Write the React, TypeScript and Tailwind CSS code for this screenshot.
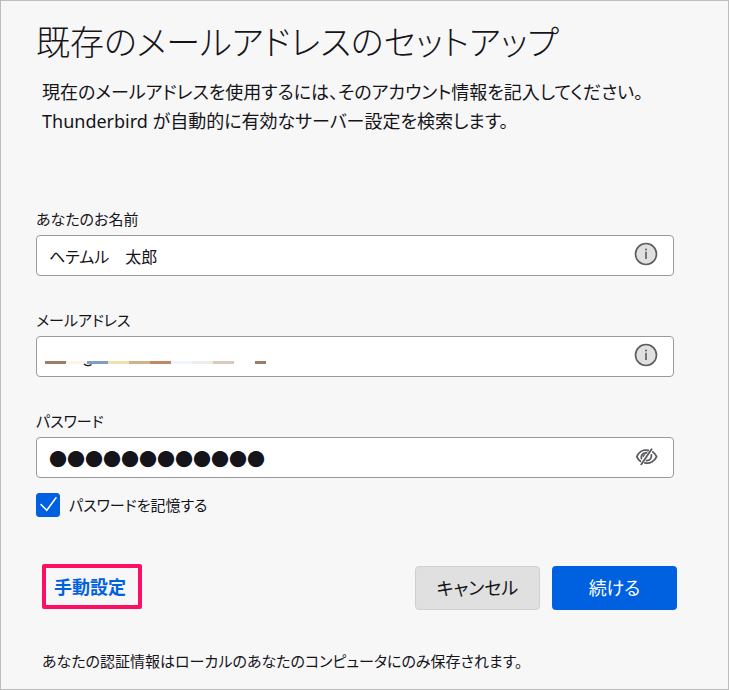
import React, { useState } from 'react';

const inputClass =
  'block h-[41px] w-full rounded border border-[#9a9a9d] bg-white pl-3 pr-14 text-[#15141a] outline-none';

const redactedColors = [
  'bg-[#9a7f68]',
  'bg-[#faf4ec]',
  'bg-[#829dbe]',
  'bg-[#ebe2b0]',
  'bg-[#cdb489]',
  'bg-[#be8a62]',
  'bg-[#f1f5fd]',
  'bg-[#ededea]',
  'bg-[#d8cabe]',
  'bg-white',
];

const InfoIcon: React.FC = () => (
  <svg width="24" height="24" viewBox="0 0 24 24" fill="none">
    <circle cx="12" cy="12" r="10.5" fill="#e0e0e1" stroke="#5b5b60" strokeWidth="1.6" />
    <path d="M12 9.800v7.200" stroke="#5b5b60" strokeWidth="1.6" />
    <circle cx="12" cy="7.4" r="1" fill="#5b5b60" />
  </svg>
);

const EyeSlashIcon: React.FC = () => (
  <svg width="24" height="24" viewBox="0 0 24 24" fill="none" stroke="#5b5b60" strokeWidth="1.8" strokeLinecap="round">
    <path d="M17.600 4.200 7.200 19.400" />
    <path d="M14.200 5.500C9.200 4.400 4.800 6.900 2.800 11.700c.8 2 2 3.500 3.600 4.600" />
    <path d="M18.800 7c1.700 1.100 3 2.700 3.800 4.700-2 4.900-6.800 7.400-11.800 6.100" />
    <path d="M12.600 7.900c-3.600-.4-6 2.200-5.200 5.600" />
    <path d="M10.800 9.600c-.9.300-1.400 1-1.500 1.900" strokeWidth="1.300" />
    <path d="M17.400 10c.5 3.200-1.500 5.500-4.800 5.600" />
  </svg>
);

const App: React.FC = () => {
  const [name, setName] = useState('ヘテムル　太郎');
  const [email, setEmail] = useState('');
  const [password, setPassword] = useState('●●●●●●●●●●●●');
  const [remember, setRemember] = useState(true);

  return (
    <main className="min-h-screen border border-[#bdbdbd] bg-[#f7f7f7] pl-[35px] pr-[51px] pt-4 text-[#15141a] font-['Noto_Sans','Noto_Sans_CJK_JP',sans-serif] [font-feature-settings:'palt']">
      <h1 className="text-[34px] leading-[48px] font-light whitespace-nowrap font-['Noto_Sans_CJK_JP',sans-serif]">既存のメールアドレスのセットアップ</h1>
      <p className="mt-[13px] pl-[6px] text-[18px] leading-[29px]">
        現在のメールアドレスを使用するには、そのアカウント情報を記入してください。
        <br />
        Thunderbird が自動的に有効なサーバー設定を検索します。
      </p>

      <form className="mt-[71px]" onSubmit={e => e.preventDefault()}>
        <div className="mr-[3px] flex flex-col gap-8 text-[15px] leading-6">
          <div>
            <label htmlFor="name" className="mb-1 block">あなたのお名前</label>
            <div className="relative">
              <input id="name" type="text" className={`${inputClass} text-[16px]`} value={name} onChange={e => setName(e.target.value)} />
              <button type="button" aria-label="info" className="absolute right-4 top-[7px]"><InfoIcon /></button>
            </div>
          </div>

          <div>
            <label htmlFor="email" className="mb-1 block">メールアドレス</label>
            <div className="relative">
              <input id="email" type="text" className={`${inputClass} text-[16px]`} value={email} onChange={e => setEmail(e.target.value)} />
              <div className="pointer-events-none absolute left-[9px] top-[25px] flex h-[3px]">
                {redactedColors.map((color, i) => (
                  <span key={i} className={`w-[21px] ${color}`} />
                ))}
                <span className="w-[11px] bg-[#9a7f68]" />
                <svg width="10" height="4" viewBox="0 0 10 4" className="absolute left-[38px] top-[2px]">
                  <path d="M1 1c2 2.200 5.500 2.200 7.500.5" fill="none" stroke="#15141a" strokeWidth="1.200" />
                </svg>
              </div>
              <button type="button" aria-label="info" className="absolute right-4 top-[7px]"><InfoIcon /></button>
            </div>
          </div>

          <div>
            <label htmlFor="password" className="mb-1 block">パスワード</label>
            <div className="relative">
              <input id="password" type="text" className={`${inputClass} text-[18px]`} value={password} onChange={e => setPassword(e.target.value)} />
              <button type="button" aria-label="show password" className="absolute right-4 top-2"><EyeSlashIcon /></button>
            </div>
          </div>
        </div>

        <label className="mt-[15px] flex items-center gap-[9px] text-[15px] leading-6">
          <span className="relative block size-6">
            <input
              type="checkbox"
              className="block size-6 appearance-none rounded-[3px] border border-[#9a9a9d] bg-white checked:border-[#0061e0] checked:bg-[#0061e0]"
              checked={remember}
              onChange={e => setRemember(e.target.checked)}
            />
            {remember && (
              <svg width="24" height="24" viewBox="0 0 24 24" className="pointer-events-none absolute inset-0">
                <path d="M5 11.500 10.800 17.300 20 4.800" fill="none" stroke="#fff" strokeWidth="1.500" strokeLinecap="round" />
              </svg>
            )}
          </span>
          パスワードを記憶する
        </label>

        <div className="mt-[47px] flex items-start justify-between pl-[6px]">
          <a href="#manual" className="flex h-[45px] w-[100px] items-center rounded-[2px] border-4 border-[#ff0f64] pl-2 pt-[2px] text-[18px] font-bold text-[#0061e0]">
            手動設定
          </a>
          <div className="flex gap-3 pt-[2px] text-[18px]">
            <button type="button" className="h-11 w-[125px] rounded border border-[#cfcfd1] bg-[#e0e0e0]">キャンセル</button>
            <button type="submit" className="h-11 w-[125px] rounded bg-[#0061e0] text-white">続ける</button>
          </div>
        </div>
      </form>

      <p className="mt-[39px] pl-[6px] text-[15px] leading-6">あなたの認証情報はローカルのあなたのコンピュータにのみ保存されます。</p>
    </main>
  );
};

export default App;
